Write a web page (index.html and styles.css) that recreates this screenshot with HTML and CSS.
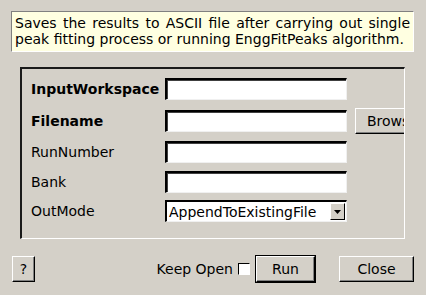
FILE: index.html
```html
<!DOCTYPE html>
<html>
<head>
<meta charset="utf-8">
<link rel="stylesheet" href="styles.css">
</head>
<body>
<div class="dialog">
  <div class="tip">Saves the results to ASCII file after carrying out single peak fitting process or running EnggFitPeaks algorithm.</div>
  <div class="group">
    <div class="grid">
      <div class="label bold">InputWorkspace</div>
      <div class="field"><span class="input"></span></div>
      <div class="extra"></div>

      <div class="label bold">Filename</div>
      <div class="field"><span class="input"></span></div>
      <div class="extra"><span class="btn browse">Browse</span></div>

      <div class="label">RunNumber</div>
      <div class="field"><span class="input"></span></div>
      <div class="extra"></div>

      <div class="label">Bank</div>
      <div class="field"><span class="input"></span></div>
      <div class="extra"></div>

      <div class="label">OutMode</div>
      <div class="field">
        <span class="combo"><span class="combo-text">AppendToExistingFile</span><span class="arrow"><svg width="7" height="4" viewBox="0 0 7 4"><path d="M0 0H7L3.5 4Z" fill="#000"/></svg></span></span>
      </div>
      <div class="extra"></div>
    </div>
  </div>
  <div class="footer">
    <span class="btn help">?</span>
    <span class="spacer"></span>
    <span class="keep">Keep Open</span>
    <span class="check"></span>
    <span class="default"><span class="btn run">Run</span></span>
    <span class="btn close">Close</span>
  </div>
</div>
</body>
</html>
```
FILE: styles.css
```css
html, body {
  margin: 0;
  padding: 0;
  background: #d4d0c8;
}
body {
  font-family: "DejaVu Sans", sans-serif;
  font-size: 14px;
  color: #000;
  width: 426px;
  height: 295px;
  overflow: hidden;
}
.dialog {
  display: flex;
  flex-direction: column;
}
.tip {
  margin: 11px 0 0 11px;
  width: 403px;
  height: 41px;
  box-sizing: border-box;
  background: #ffffe1;
  border-top: 1px solid #808080;
  border-left: 1px solid #808080;
  border-right: 1px solid #ffffff;
  border-bottom: 1px solid #ffffff;
  padding: 3px 3px 0 3px;
  font-size: 14px;
  line-height: 16px;
  text-align: justify;
}
.group {
  margin: 15px 0 0 20px;
  width: 385px;
  height: 172px;
  box-sizing: border-box;
  border-top: 2px solid #1a1a1a;
  border-left: 2px solid #1a1a1a;
  border-right: 1px solid #ffffff;
  border-bottom: 1px solid #ffffff;
  padding: 4px 0 0 9px;
  overflow: hidden;
}
.grid {
  display: grid;
  grid-template-columns: 126px 182px 1fr;
  grid-template-rows: 32px 32px 30px 29px 30px;
  column-gap: 8px;
  align-items: center;
}
.label {
  white-space: nowrap;
}
.bold {
  font-weight: bold;
}
.field {
  display: flex;
}
.input {
  display: block;
  width: 182px;
  height: 22px;
  box-sizing: border-box;
  background: #fff;
  border-top: 2px solid #000;
  border-left: 2px solid #000;
  border-right: 1px solid #f0f0f0;
  border-bottom: 1px solid #f0f0f0;
  box-shadow: inset 1px 1px 0 #404040;
}
.btn {
  display: flex;
  align-items: center;
  justify-content: center;
  box-sizing: border-box;
  background: #d4d0c8;
  border-top: 1px solid #ffffff;
  border-left: 1px solid #ffffff;
  border-right: 1px solid #000;
  border-bottom: 1px solid #000;
  box-shadow: inset -1px -1px 0 #808080;
  white-space: nowrap;
}
.extra {
  display: flex;
  overflow: visible;
}
.browse {
  width: 72px;
  height: 26px;
  justify-content: flex-start;
  padding-left: 11px;
  flex: none;
}
.combo {
  display: flex;
  align-items: center;
  width: 182px;
  height: 22px;
  box-sizing: border-box;
  background: #fff;
  border-top: 2px solid #000;
  border-left: 2px solid #000;
  border-right: 1px solid #f0f0f0;
  border-bottom: 1px solid #f0f0f0;
  padding-left: 2px;
}
.combo-text {
  flex: 1;
}
.arrow {
  width: 15px;
  height: 17px;
  margin-right: 1px;
  box-sizing: border-box;
  display: flex;
  align-items: center;
  justify-content: center;
  background: #d4d0c8;
  border-top: 1px solid #fff;
  border-left: 1px solid #fff;
  border-right: 1px solid #000;
  border-bottom: 1px solid #000;
}
.footer {
  display: flex;
  align-items: center;
  margin: 16px 12px 0 12px;
  height: 28px;
}
.help {
  width: 23px;
  height: 26px;
}
.spacer {
  flex: 1;
}
.keep {
  margin-right: 5px;
}
.check {
  width: 12px;
  height: 12px;
  box-sizing: border-box;
  background: #fff;
  border-top: 1px solid #000;
  border-left: 1px solid #000;
  border-right: 1px solid #fff;
  border-bottom: 1px solid #fff;
  margin-right: 5px;
}
.default {
  display: flex;
  border: 1px solid #000;
  margin-right: 23px;
}
.run {
  width: 59px;
  height: 26px;
}
.close {
  width: 75px;
  height: 26px;
}
```
